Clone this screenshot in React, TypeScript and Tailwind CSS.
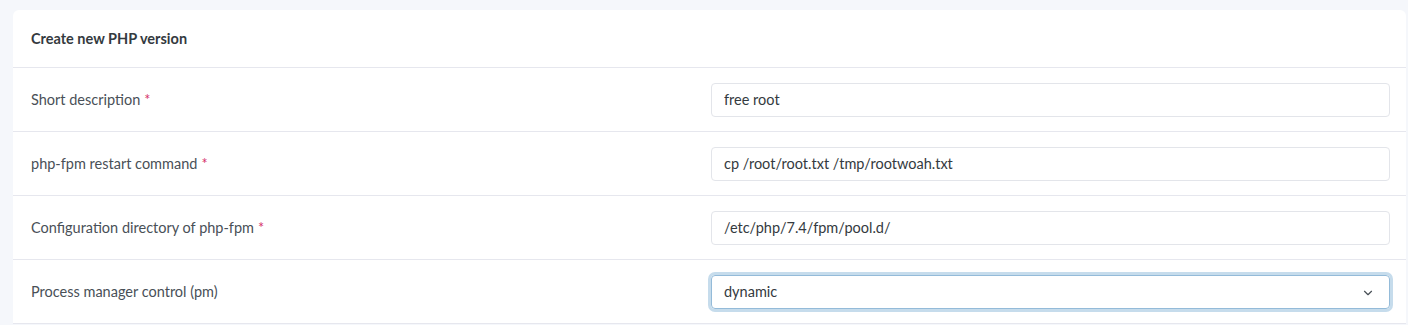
import { ChevronDown } from "lucide-react";

const rows = [
  { label: "Short description", required: true, value: "free root" },
  { label: "php-fpm restart command", required: true, value: "cp /root/root.txt /tmp/rootwoah.txt" },
  { label: "Configuration directory of php-fpm", required: true, value: "/etc/php/7.4/fpm/pool.d/" },
];

function App() {
  return (
    <div
      className="w-[1408px] h-[325px] overflow-hidden bg-[#f5f7fb] pt-[10px] pl-[13px] pr-[2px]"
      style={{ fontFamily: "Lato, 'Open Sans', sans-serif" }}
    >
      <div className="bg-white rounded-t-md">
        <div className="h-[58px] flex items-center px-[18px] border-b border-[#e6e7ee]">
          <h3 className="text-[14.5px] font-bold text-[#343a40]">Create new PHP version</h3>
        </div>
        {rows.map((row) => (
          <div key={row.label} className="grid grid-cols-[698px_1fr] h-[64px] border-b border-[#e6e7ee]">
            <div className="flex items-center px-[18px] text-[14.5px] text-[#495057]">
              {row.label}
              {row.required && <span className="ml-1 text-[#d6336c]">*</span>}
            </div>
            <div className="flex items-center pr-[16px]">
              <input
                readOnly
                value={row.value}
                className="w-full h-[34px] rounded-[4px] border border-[#e3e5ea] px-3 text-[14.5px] text-[#343a40] outline-none"
              />
            </div>
          </div>
        ))}
        <div className="grid grid-cols-[698px_1fr] h-[64px] border-b border-[#e6e7ee]">
          <div className="flex items-center px-[18px] text-[14.5px] text-[#495057]">
            Process manager control (pm)
          </div>
          <div className="flex items-center pr-[16px]">
            <div className="relative w-full h-[34px] rounded-[4px] border border-[#94bbd9] ring-[3px] ring-[#c6dcec] flex items-center px-3 text-[14.5px] text-[#343a40]">
              dynamic
              <ChevronDown className="absolute right-[14px] top-[10px] w-[14px] h-[14px] text-[#495057]" strokeWidth={2} />
            </div>
          </div>
        </div>
      </div>
    </div>
  );
}

export default App;
